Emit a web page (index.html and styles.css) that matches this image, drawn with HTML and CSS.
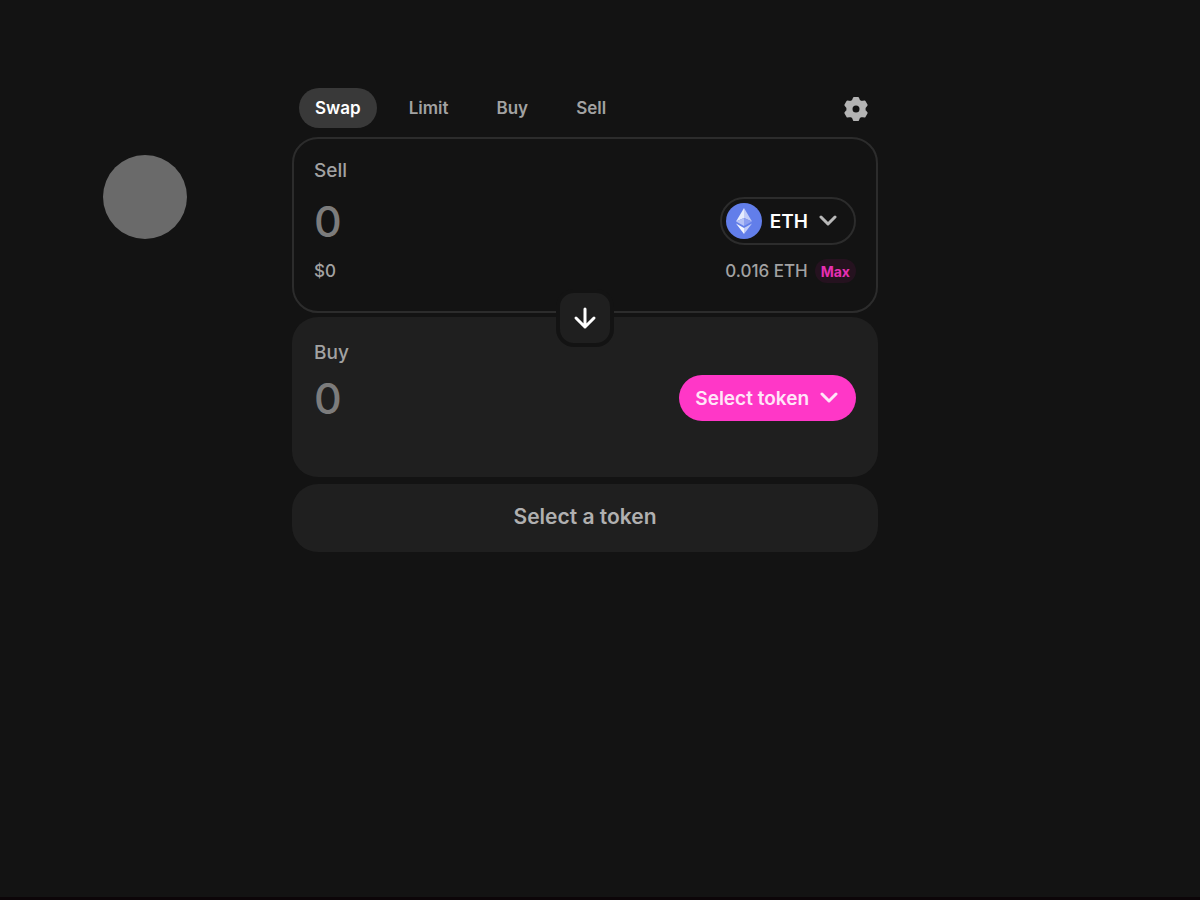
FILE: index.html
```
<!DOCTYPE html>
<html lang="en">
<head>
    <meta charset="UTF-8">
    <meta name="viewport" content="width=device-width, initial-scale=1">
    <title>Swap</title>
    <link rel="stylesheet" href="styles.css">
</head>
<body>
<div class="pointer"></div>
<main class="swap">
    <div class="topbar">
        <nav class="tabs">
            <button type="button" class="tab active">Swap</button>
            <button type="button" class="tab">Limit</button>
            <button type="button" class="tab">Buy</button>
            <button type="button" class="tab">Sell</button>
        </nav>
        <button type="button" class="settings" aria-label="Settings">
            <svg width="24" height="24" viewBox="0 0 24 24">
                <path fill="#b4b4b4" stroke="#b4b4b4" stroke-width="2" stroke-linejoin="round" fill-rule="evenodd" d="M10 1h4l1.200 2.800 2.200 1.200 3.200-.4 2 3.500-2 2.500v2.800l2 2.500-2 3.500-3.200-.4-2.200 1.200L14 23h-4l-1.200-2.800L6.600 19l-3.200.4-2-3.500 2-2.500v-2.800l-2-2.500 2-3.500 3.200.4 2.200-1.200zM12 7.500a4.500 4.500 0 1 0 0 9 4.500 4.500 0 0 0 0-9z"/>
            </svg>
        </button>
    </div>

    <section class="panel sell">
        <label class="label" for="sell">Sell</label>
        <div class="row">
            <input type="text" id="sell" class="amount" placeholder="0">
            <button type="button" class="token">
                <svg width="36" height="36" viewBox="0 0 36 36">
                    <circle cx="18" cy="18" r="18" fill="#627eea"/>
                    <path fill="#e6ecff" d="M18 5l-8 13.500 8-3.500z"/>
                    <path fill="#c3cdf8" d="M18 5l8 13.500-8-3.500z"/>
                    <path fill="#b5c1f6" d="M18 15l-8 3.500 8 4.500z"/>
                    <path fill="#8c9ef0" d="M18 15l8 3.500-8 4.500z"/>
                    <path fill="#f2f5ff" d="M10 20.500l8 4.500v6z"/>
                    <path fill="#c3cdf8" d="M26 20.500l-8 4.500v6z"/>
                </svg>
                <span>ETH</span>
                <svg class="chevron" width="20" height="12" viewBox="0 0 20 12">
                    <path d="M3 2l7 7 7-7"/>
                </svg>
            </button>
        </div>
        <div class="row info">
            <span>$0</span>
            <div class="balance">
                <span>0.016 ETH</span>
                <button type="button" class="max">Max</button>
            </div>
        </div>
        <button type="button" class="switch" aria-label="Switch tokens">
            <svg width="24" height="24" viewBox="0 0 24 24">
                <path d="M12 3v18M3 12l9 9 9-9"/>
            </svg>
        </button>
    </section>

    <section class="panel buy">
        <label class="label" for="buy">Buy</label>
        <div class="row">
            <input type="text" id="buy" class="amount" placeholder="0">
            <button type="button" class="token select">
                <span>Select token</span>
                <svg class="chevron" width="20" height="12" viewBox="0 0 20 12">
                    <path d="M3 2l7 7 7-7"/>
                </svg>
            </button>
        </div>
    </section>

    <button type="button" class="submit">Select a token</button>
</main>
</body>
</html>
```
FILE: styles.css
```
* {
    margin: 0;
    padding: 0;
    box-sizing: border-box;
}

body {
    min-height: 100vh;
    padding: 88px 30px 30px 0;
    background-color: #131313;
    border-bottom: 3px solid #0c0508;
    font-family: Inter, "Liberation Sans", sans-serif;
    color: #a2a2a2;
}

button {
    border: none;
    background: none;
    font-family: inherit;
    cursor: pointer;
}

svg {
    display: block;
    flex: none;
}

/* touch indicator floating over the page */
.pointer {
    position: absolute;
    left: 103px;
    top: 155px;
    width: 84px;
    height: 84px;
    border-radius: 50%;
    background-color: #6a6a6a;
    pointer-events: none;
}

.swap {
    max-width: 586px;
    margin: 0 auto;
}

.topbar {
    display: flex;
    justify-content: space-between;
    align-items: center;
    padding: 0 10px 0 7px;
    margin-bottom: 9px;
}

.tabs {
    display: flex;
    gap: 16px;
}

.tab {
    height: 40px;
    padding: 0 16px;
    border-radius: 20px;
    font-size: 17px;
    font-weight: 600;
    color: #a2a2a2;
}

.tab.active {
    background-color: #393939;
    color: #fff;
}

.settings {
    padding-top: 2px;
}

.panel {
    position: relative;
    padding: 20px;
    border: 2px solid transparent;
    border-radius: 26px;
    margin-bottom: 4px;
}

.sell {
    border-color: #2c2c2c;
    padding-bottom: 28px;
}

.buy {
    min-height: 160px;
    padding-top: 22px;
    margin-bottom: 7px;
    background-color: #1f1f1f;
}

.label {
    display: block;
    font-size: 19px;
    line-height: 24px;
    font-weight: 500;
}

.row {
    display: flex;
    justify-content: space-between;
    align-items: center;
    margin-top: 14px;
}

.buy .row {
    margin-top: 10px;
}

.amount {
    flex: 1;
    min-width: 0;
    height: 46px;
    border: none;
    outline: none;
    background: none;
    font-family: inherit;
    font-size: 43px;
    font-weight: 500;
    color: #fff;
}

.amount::placeholder {
    color: #7c7c7c;
}

.token {
    display: flex;
    align-items: center;
    gap: 8px;
    height: 48px;
    padding: 0 16px 0 4px;
    border: 2px solid #2c2c2c;
    border-radius: 24px;
    font-size: 19px;
    font-weight: 600;
    color: #fff;
}

.token .chevron {
    margin-left: 2px;
}

.chevron path {
    fill: none;
    stroke: #b8b8b8;
    stroke-width: 3;
    stroke-linecap: round;
    stroke-linejoin: round;
}

.select {
    height: 46px;
    padding: 0 17px 0 16px;
    border: none;
    background-color: #ff37c7;
    color: #ffe6f8;
}

.select .chevron path {
    stroke: #ffe6f8;
}

.info {
    font-size: 17px;
    line-height: 24px;
    font-weight: 500;
}

.balance {
    display: flex;
    align-items: center;
    gap: 7px;
}

.max {
    height: 24px;
    padding: 0 6px;
    border-radius: 12px;
    background-color: #25121f;
    font-size: 14px;
    font-weight: 700;
    color: #e62fb3;
}

.switch {
    position: absolute;
    left: 50%;
    bottom: -36px;
    z-index: 1;
    display: flex;
    justify-content: center;
    align-items: center;
    width: 58px;
    height: 58px;
    border: 4px solid #131313;
    border-radius: 18px;
    background-color: #1f1f1f;
    transform: translateX(-50%);
}

.switch path {
    fill: none;
    stroke: #fff;
    stroke-width: 3;
    stroke-linecap: round;
    stroke-linejoin: round;
}

.submit {
    display: block;
    width: 100%;
    height: 68px;
    padding-bottom: 4px;
    border-radius: 26px;
    background-color: #1f1f1f;
    font-size: 21px;
    font-weight: 600;
    color: #b0b0b0;
}
```
